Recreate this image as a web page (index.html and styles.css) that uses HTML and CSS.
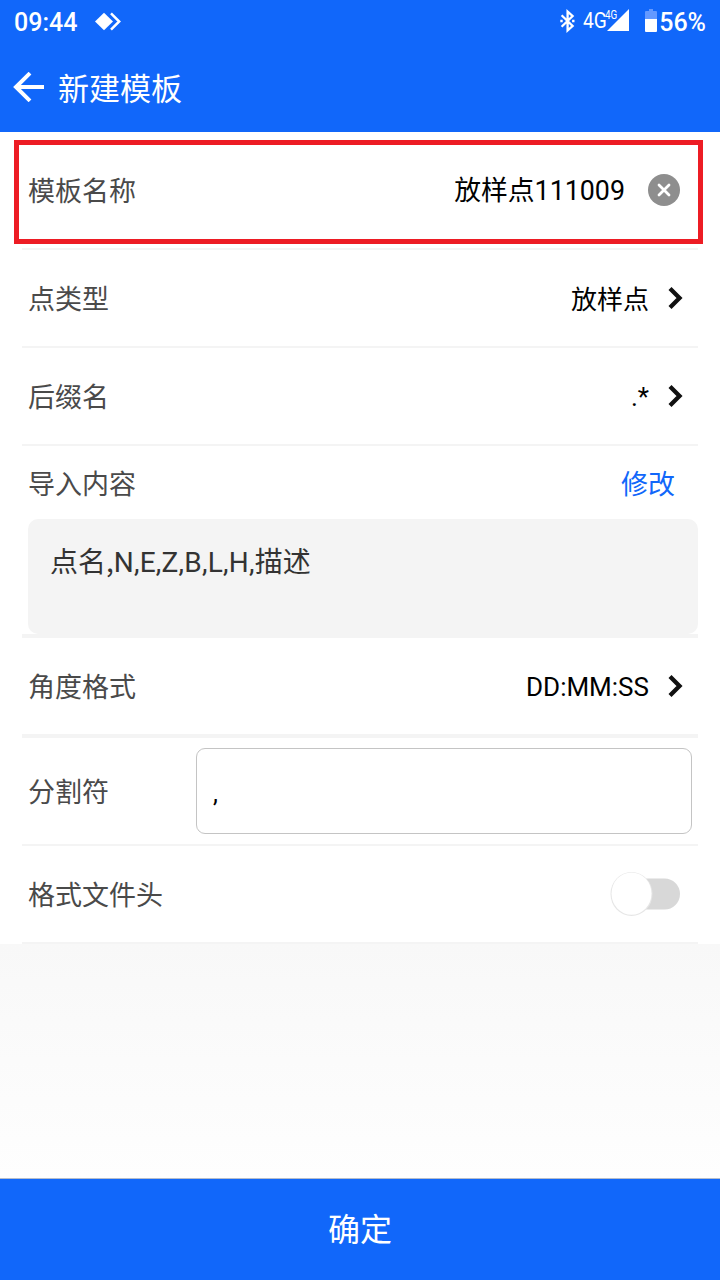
FILE: index.html
```html
<!DOCTYPE html>
<html lang="zh-CN">
<head>
<meta charset="utf-8">
<title>新建模板</title>
<link rel="stylesheet" href="styles.css">
</head>
<body>
<div class="screen">
  <header class="header">
    <div class="status">
      <span class="clock">09:44</span>
      <svg class="app-icon" width="26" height="20" viewBox="0 0 26 20"><path d="M9 .7 18 9.5 9 18.3 0 9.5Z" fill="#fff"/><path d="M16 1.3 24.2 9.5 16 17.7" fill="none" stroke="#fff" stroke-width="2.5"/></svg>
      <div class="indicators">
        <svg class="bluetooth" width="16" height="24" viewBox="0 0 16 24"><path d="M1.600 6.200 12.600 17 7.600 21.400V2.600L12.600 7 1.600 17.800" fill="none" stroke="#fff" stroke-width="2.300"/><path d="M.3 10.800h2.400v2.400H.3zM12.100 10.800h2.400v2.400h-2.400z" fill="#fff"/></svg>
        <span class="network">4G</span>
        <span class="signal-label">4G</span>
        <svg class="signal" width="22" height="22" viewBox="0 0 22 22"><path d="M22 0V22H0Z" fill="#fff"/></svg>
        <svg class="battery" width="12" height="23" viewBox="0 0 12 23"><path d="M4 0h4v2h3q1 0 1 1v7H0V3q0-1 1-1h3Z" fill="#6499ff"/><path d="M0 10h12v12q0 1-1 1H1q-1 0-1-1Z" fill="#fff"/></svg>
        <span class="percent">56%</span>
      </div>
    </div>
    <div class="titlebar">
      <svg class="back" width="32" height="30" viewBox="0 0 32 30"><path d="M17 1.200 3 15 17 28.800M3 15H31" fill="none" stroke="#fff" stroke-width="4"/></svg>
      <h1 class="title">新建模板</h1>
    </div>
  </header>
  <main class="form">
    <div class="highlight"></div>
    <div class="row row-name">
      <span class="label">模板名称</span>
      <span class="value value-name">放样点111009</span>
      <svg class="clear" width="32" height="32" viewBox="0 0 32 32"><circle cx="16" cy="16" r="16" fill="#8e8e8e"/><path d="M11 11 21 21M21 11 11 21" stroke="#fff" stroke-width="2.800" stroke-linecap="round"/></svg>
    </div>
    <div class="row">
      <span class="label">点类型</span>
      <span class="value value-cjk">放样点</span>
      <svg class="chevron" width="16" height="24" viewBox="0 0 16 24"><path d="M3 2.500 12.500 12 3 21.500" fill="none" stroke="#111" stroke-width="4.300"/></svg>
    </div>
    <div class="row">
      <span class="label">后缀名</span>
      <span class="value">.*</span>
      <svg class="chevron" width="16" height="24" viewBox="0 0 16 24"><path d="M3 2.500 12.500 12 3 21.500" fill="none" stroke="#111" stroke-width="4.300"/></svg>
    </div>
    <div class="row row-content">
      <div class="content-head">
        <span class="label">导入内容</span>
        <a class="edit">修改</a>
      </div>
      <div class="content-box"><span class="cjk">点名,</span><span class="columns">N,E,Z,B,L,H,</span>描述</div>
    </div>
    <div class="row row-thick">
      <span class="label">角度格式</span>
      <span class="value">DD:MM:SS</span>
      <svg class="chevron" width="16" height="24" viewBox="0 0 16 24"><path d="M3 2.500 12.500 12 3 21.500" fill="none" stroke="#111" stroke-width="4.300"/></svg>
    </div>
    <div class="row row-separator">
      <span class="label">分割符</span>
      <div class="field">,</div>
    </div>
    <div class="row">
      <span class="label">格式文件头</span>
      <svg class="switch" width="72" height="46" viewBox="0 0 72 46"><rect x="22" y="7.500" width="48" height="31" rx="15.500" fill="#d8d8d8"/><ellipse cx="21.500" cy="23" rx="21" ry="22" fill="#e6e6e6"/><ellipse cx="21.500" cy="22.600" rx="20" ry="21.200" fill="#fff"/></svg>
    </div>
  </main>
  <div class="spacer"></div>
  <footer class="confirm">确定</footer>
</div>
</body>
</html>
```
FILE: styles.css
```css
* { box-sizing: border-box; }

body {
  margin: 0;
  font-family: Roboto, "Noto Sans CJK SC", sans-serif;
  font-size: 27px;
  color: #000;
}

.screen {
  display: flex;
  flex-direction: column;
  width: 720px;
  height: 1280px;
}

.header {
  height: 132px;
  background: #1167fa;
  color: #fff;
}

.status {
  display: flex;
  align-items: center;
  height: 44px;
  padding: 0 14px;
}

.clock, .percent {
  padding-top: 2px;
  font-size: 25px;
  font-weight: 500;
  line-height: 42px;
}

.app-icon { margin-left: 18px; }

.indicators {
  display: flex;
  align-items: center;
  margin-left: auto;
}

.bluetooth {
  margin: 0 7px 2px 0;
}

.network {
  width: 23px;
  padding-bottom: 3px;
  font-size: 22px;
  line-height: 37px;
  transform: scaleX(0.87);
  transform-origin: left;
}

.signal-label {
  width: 13px;
  margin: 0 -11px 14px -1px;
  font-size: 12px;
  line-height: 12px;
  transform: scaleX(0.82);
  transform-origin: left;
}

.signal { margin-bottom: 4px; }

.battery { margin: 0 2px 3px 16px; }

.titlebar {
  display: flex;
  align-items: center;
  height: 88px;
  padding-left: 13px;
}

.back { margin-bottom: 3px; }

.title {
  margin: 0 0 0 13px;
  padding-top: 3px;
  font-size: 31px;
  font-weight: 400;
  line-height: 44px;
}

.form {
  position: relative;
  padding: 0 22px;
  background: #fff;
}

.highlight {
  position: absolute;
  left: 14px;
  top: 8px;
  width: 689px;
  height: 104px;
  border: 5px solid #ed1c24;
}

.row {
  display: flex;
  align-items: center;
  height: 98px;
  padding: 0 15px 0 6px;
  border-bottom: 2px solid #f4f4f4;
}

.row-name {
  height: 118px;
  padding-right: 18px;
}

.label {
  padding-top: 4px;
  color: #4a4a4a;
  line-height: 40px;
}

.value {
  margin-left: auto;
  padding-top: 2px;
  font-size: 26px;
  line-height: 40px;
}

.value-name { font-size: 26.8px; }

.value-cjk { padding-top: 4px; }

.clear { margin-left: 23px; }

.chevron { margin-left: 18px; }

.row-content {
  flex-direction: column;
  align-items: stretch;
  height: 192px;
  padding-right: 0;
  border-bottom-width: 4px;
}

.content-head {
  display: flex;
  align-items: center;
  justify-content: space-between;
  height: 73px;
  padding-right: 23px;
}

.edit {
  padding-top: 4px;
  color: #1167fa;
  line-height: 40px;
}

.content-box {
  height: 115px;
  padding: 21px 22px;
  border-radius: 10px;
  background: #f4f4f4;
  color: #333;
  font-size: 28px;
  font-kerning: none;
  line-height: 40px;
}

.cjk {
  font-family: "Noto Sans CJK SC", sans-serif;
}

.columns { letter-spacing: 0.22px; }

.row-thick {
  height: 100px;
  border-bottom-width: 4px;
}

.row-separator {
  justify-content: space-between;
  height: 108px;
  padding-right: 6px;
}

.field {
  width: 496px;
  height: 86px;
  padding: 3px 0 0 16px;
  border: 1px solid #c4c4c4;
  border-radius: 9px;
  font-size: 25px;
  line-height: 84px;
}

.switch { margin: 0 1px 0 auto; }

.spacer {
  flex: 1;
  background: linear-gradient(#f8f8f8, #fefefe);
}

.confirm {
  height: 102px;
  padding-top: 2px;
  border-top: 1px solid #b4bccb;
  background: #1167fa;
  color: #fff;
  font-size: 32px;
  line-height: 99px;
  text-align: center;
}
```
